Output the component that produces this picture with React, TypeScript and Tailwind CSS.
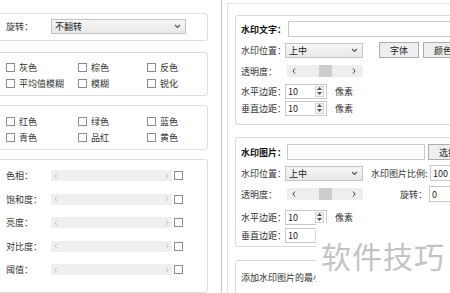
import React from "react";

const font = { fontFamily: '"Noto Sans CJK SC", "Noto Sans", sans-serif' };

function Chevron() {
  return (
    <svg width="7" height="5" viewBox="0 0 7 5" className="shrink-0">
      <polyline points="1,1 3.5,3.5 6,1" fill="none" stroke="#555" strokeWidth="1.2" />
    </svg>
  );
}

function ArrowL({ c = "#bbb" }: { c?: string }) {
  return (
    <svg width="4" height="6" viewBox="0 0 4 6" className="shrink-0">
      <polyline points="3,0.5 1,3 3,5.5" fill="none" stroke={c} strokeWidth="1" />
    </svg>
  );
}
function ArrowR({ c = "#bbb" }: { c?: string }) {
  return (
    <svg width="4" height="6" viewBox="0 0 4 6" className="shrink-0">
      <polyline points="1,0.5 3,3 1,5.5" fill="none" stroke={c} strokeWidth="1" />
    </svg>
  );
}

function Check({ label }: { label: string }) {
  return (
    <div className="flex items-center h-[16px]">
      <span className="w-[9px] h-[9px] border border-[#8c8c8c] bg-white shrink-0" />
      <span className="ml-[4px] leading-none whitespace-nowrap">{label}</span>
    </div>
  );
}

function Label({ w, children, bold }: { w: string; children: React.ReactNode; bold?: boolean }) {
  return (
    <span
      className={`${w} shrink-0 whitespace-nowrap leading-none ${bold ? "font-bold text-[#111]" : ""}`}
    >
      {children}
    </span>
  );
}

function LeftSlider({ label }: { label: string }) {
  return (
    <div className="flex items-center h-[12px]">
      <Label w="w-[45px]">{label}</Label>
      <div className="w-[121px] h-[11px] bg-[#efefef] flex items-center justify-between px-[3px]">
        <ArrowL c="#c4c4c4" />
        <ArrowR c="#c4c4c4" />
      </div>
      <span className="ml-[2px] w-[9px] h-[9px] border border-[#8c8c8c] bg-white" />
    </div>
  );
}

function Select({ text, w }: { text: string; w: string }) {
  return (
    <div
      className={`${w} shrink-0 h-[15px] border border-[#c4c4c4] bg-gradient-to-b from-[#f6f6f6] to-[#e8e8e8] flex items-center justify-between pl-[3px] pr-[4px]`}
    >
      <span className="leading-none text-[#222]">{text}</span>
      <Chevron />
    </div>
  );
}

function RightSlider() {
  return (
    <div className="w-[76px] shrink-0 h-[12px] bg-[#eeeeee] flex items-center">
      <span className="w-[9px] flex justify-end">
        <ArrowL c="#444" />
      </span>
      <span className="w-[23px]" />
      <span className="w-[13px] h-[12px] bg-[#cdcdcd]" />
      <span className="flex-1" />
      <span className="w-[11px] flex justify-start">
        <ArrowR c="#444" />
      </span>
    </div>
  );
}

function Spin({ v }: { v: string }) {
  return (
    <div className="w-[42px] shrink-0 h-[15px] border border-[#c8c8c8] bg-white flex items-center">
      <span className="flex-1 pl-[2px] leading-none text-[#222]">{v}</span>
      <div className="w-[9px] h-[11px] mr-[2px] border border-[#d4d4d4] bg-[#f2f2f2] flex flex-col items-center justify-around">
        <svg width="5" height="3" viewBox="0 0 5 3">
          <polygon points="0,3 2.5,0 5,3" fill="#555" />
        </svg>
        <svg width="5" height="3" viewBox="0 0 5 3">
          <polygon points="0,0 2.5,3 5,0" fill="#555" />
        </svg>
      </div>
    </div>
  );
}

function Button({ text, w }: { text: string; w: string }) {
  return (
    <div
      className={`${w} shrink-0 h-[16px] border border-[#adadad] bg-[#eeeeee] flex items-center justify-center leading-none text-[#222] whitespace-nowrap`}
    >
      {text}
    </div>
  );
}

function TextBox({ w, v = "" }: { w: string; v?: string }) {
  return (
    <div
      className={`${w} shrink-0 h-[16px] border border-[#c8c8c8] bg-white flex items-center pl-[2px] leading-none text-[#222]`}
    >
      {v}
    </div>
  );
}

export default function App() {
  return (
    <div
      className="relative w-[450px] h-[293px] overflow-hidden bg-white flex text-[9px] text-[#333]"
      style={font}
    >
      {/* Left column */}
      <div className="w-[221px] shrink-0 pt-[13px] flex flex-col">
        <div className="ml-[-3px] w-[211px] h-[29px] border border-[#dedede] rounded-[3px] flex items-center pl-[8px]">
          <Label w="w-[45px]">旋转：</Label>
          <Select text="不翻转" w="w-[135px]" />
        </div>

        <div className="ml-[-3px] mt-[11px] w-[211px] h-[46px] border border-[#dedede] rounded-[3px] pl-[8px] pt-[7px] grid grid-cols-[72px_69px_1fr] content-start">
          <Check label="灰色" />
          <Check label="棕色" />
          <Check label="反色" />
          <Check label="平均值模糊" />
          <Check label="模糊" />
          <Check label="锐化" />
        </div>

        <div className="ml-[-3px] mt-[9px] w-[211px] h-[46px] border border-[#dedede] rounded-[3px] pl-[8px] pt-[7px] grid grid-cols-[72px_69px_1fr] content-start">
          <Check label="红色" />
          <Check label="绿色" />
          <Check label="蓝色" />
          <Check label="青色" />
          <Check label="品红" />
          <Check label="黄色" />
        </div>

        <div className="ml-[-3px] mt-[9px] w-[211px] h-[140px] border border-[#dedede] rounded-[3px] pl-[8px] pt-[10px] flex flex-col gap-[11.5px]">
          <LeftSlider label="色相：" />
          <LeftSlider label="饱和度：" />
          <LeftSlider label="亮度：" />
          <LeftSlider label="对比度：" />
          <LeftSlider label="阈值：" />
        </div>
      </div>

      {/* Right column */}
      <div className="w-[229px] shrink-0 border-l border-[#c9c9c9] pl-[5px]">
        <div className="mt-[3px] h-[300px] border-l border-t border-[#e2e2e2] pl-[7px]">
          {/* Group 1 */}
          <div className="mt-[11px] w-[250px] h-[110px] border border-[#d9d9d9] rounded-[3px] pl-[5px] pt-[5px] flex flex-col">
            <div className="flex items-center h-[16px]">
              <Label w="w-[47px]" bold>
                水印文字：
              </Label>
              <TextBox w="w-[200px]" />
            </div>
            <div className="flex items-center h-[16px] mt-[5px]">
              <Label w="w-[44px]">水印位置：</Label>
              <Select text="上中" w="w-[78px]" />
              <span className="w-[16px] shrink-0" />
              <Button text="字体" w="w-[40px]" />
              <span className="w-[4px] shrink-0" />
              <Button text="颜色" w="w-[40px]" />
            </div>
            <div className="flex items-center h-[16px] mt-[5px]">
              <Label w="w-[46px]">透明度：</Label>
              <RightSlider />
            </div>
            <div className="flex items-center h-[16px] mt-[4px]">
              <Label w="w-[44px]">水平边距：</Label>
              <Spin v="10" />
              <span className="ml-[8px] leading-none">像素</span>
            </div>
            <div className="flex items-center h-[16px] mt-[1px]">
              <Label w="w-[44px]">垂直边距：</Label>
              <Spin v="10" />
              <span className="ml-[8px] leading-none">像素</span>
            </div>
          </div>

          {/* Group 2 */}
          <div className="mt-[12px] w-[250px] h-[110px] border border-[#d9d9d9] rounded-[3px] pl-[5px] pt-[6px] flex flex-col">
            <div className="flex items-center h-[16px]">
              <Label w="w-[46px]" bold>
                水印图片：
              </Label>
              <TextBox w="w-[138px]" />
              <span className="w-[3px] shrink-0" />
              <Button text="选择" w="w-[40px]" />
            </div>
            <div className="flex items-center h-[16px] mt-[5px]">
              <Label w="w-[44px]">水印位置：</Label>
              <Select text="上中" w="w-[78px]" />
              <span className="w-[8px] shrink-0" />
              <Label w="w-[59px]">水印图片比例:</Label>
              <TextBox w="w-[40px]" v="100" />
            </div>
            <div className="flex items-center h-[16px] mt-[5px]">
              <Label w="w-[46px]">透明度：</Label>
              <RightSlider />
              <span className="w-[37px] shrink-0" />
              <Label w="w-[29px]">旋转：</Label>
              <TextBox w="w-[40px]" v="0" />
            </div>
            <div className="flex items-center h-[16px] mt-[7px]">
              <Label w="w-[44px]">水平边距：</Label>
              <Spin v="10" />
              <span className="ml-[8px] leading-none">像素</span>
            </div>
            <div className="flex items-center h-[16px] mt-[2px]">
              <Label w="w-[44px]">垂直边距：</Label>
              <Spin v="10" />
              <span className="ml-[8px] leading-none">像素</span>
            </div>
          </div>

          {/* Group 3 */}
          <div className="mt-[13px] w-[250px] h-[60px] border border-[#d9d9d9] rounded-[3px] pl-[5px] pt-[10px]">
            <div className="h-[12px] flex items-center leading-none whitespace-nowrap">添加水印图片的最小尺寸</div>
          </div>
        </div>
      </div>

      {/* Watermark overlay */}
      <div className="absolute left-[316px] top-[223px] right-0 bottom-0 bg-white pl-[5px] pt-[17px]">
        <div className="text-[30px] leading-[30px] tracking-[1px] text-[#c3c3c3] whitespace-nowrap">软件技巧</div>
      </div>
    </div>
  );
}
